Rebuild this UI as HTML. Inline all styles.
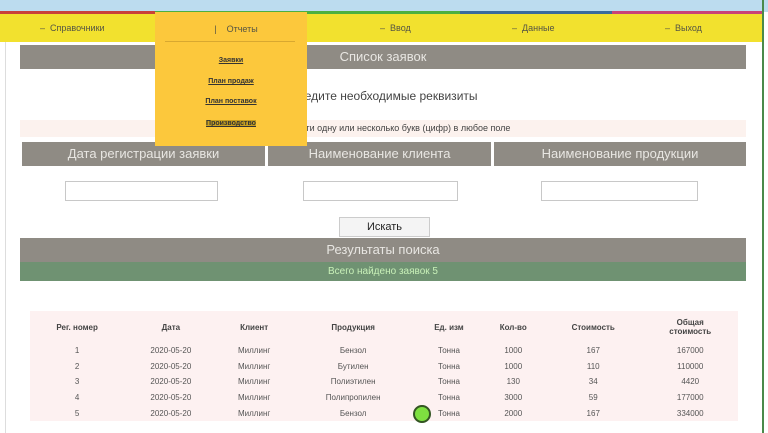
<!DOCTYPE html>
<html><head><meta charset="utf-8"><style>
*{margin:0;padding:0;box-sizing:border-box}
body{width:768px;height:433px;overflow:hidden;background:#fff;position:relative;font-family:"Liberation Sans","DejaVu Sans",sans-serif;color:#333}
.a{position:absolute}
.g{background:#8f8b84;color:#e8e6e2;text-align:center;font-size:13px}
.mi{font-size:9px;color:#554;top:23px}
.dl{position:absolute;left:0;width:152px;text-align:center;font-size:7px;font-weight:bold}
.dl span{color:#333;text-decoration:underline}
table{border-collapse:collapse;font-size:8px;color:#555;width:100%}
td,th{text-align:center;height:15.6px;padding:0}
th{font-weight:bold;color:#444;height:32px}
input{position:absolute;height:20px;border:1px solid #c8c8c8;background:#fff}
</style></head><body>
<div class="a" style="left:0;top:0;width:768px;height:12px;background:#bcdcef"></div>
<div class="a" style="left:0;top:11px;width:155px;height:3px;background:#c8413a"></div>
<div class="a" style="left:155px;top:11px;width:305px;height:3px;background:#4cb040"></div>
<div class="a" style="left:460px;top:11px;width:152px;height:3px;background:#3a6a9c"></div>
<div class="a" style="left:612px;top:11px;width:150px;height:3px;background:#c84478"></div>
<div class="a" style="left:0;top:14px;width:762px;height:28px;background:#f2e12e"></div>
<div class="a" style="left:762px;top:0;width:2px;height:433px;background:#4a8a4a"></div>
<div class="a" style="left:5px;top:42px;width:1px;height:391px;background:#ddd"></div>
<div class="a mi" style="left:40px">–&nbsp;&nbsp;Справочники</div>
<div class="a mi" style="left:380px">–&nbsp;&nbsp;Ввод</div>
<div class="a mi" style="left:512px">–&nbsp;&nbsp;Данные</div>
<div class="a mi" style="left:665px">–&nbsp;&nbsp;Выход</div>
<div class="a g" style="left:20px;top:45px;width:726px;height:24px;line-height:24px">Список заявок</div>
<div class="a" style="left:0;top:89px;width:768px;text-align:center;font-size:12px;color:#444">Введите необходимые реквизиты</div>
<div class="a" style="left:20px;top:120px;width:726px;height:17px;background:#fcf2ee;font-size:9px;line-height:17px;text-align:center;color:#444">Можно ввести одну или несколько букв (цифр) в любое поле</div>
<div class="a g" style="left:22px;top:142px;width:243px;height:24px;line-height:24px">Дата регистрации заявки</div>
<div class="a g" style="left:268px;top:142px;width:223px;height:24px;line-height:24px">Наименование клиента</div>
<div class="a g" style="left:494px;top:142px;width:252px;height:24px;line-height:24px">Наименование продукции</div>
<input style="left:65px;top:181px;width:153px">
<input style="left:303px;top:181px;width:155px">
<input style="left:541px;top:181px;width:157px">
<div class="a" style="left:339px;top:217px;width:91px;height:20px;border:1px solid #ccc;background:#f4f4f4;font-size:11px;text-align:center;line-height:18px;color:#222">Искать</div>
<div class="a g" style="left:20px;top:238px;width:726px;height:24px;line-height:24px">Результаты поиска</div>
<div class="a" style="left:20px;top:262px;width:726px;height:19px;background:#6f9272;color:#c8f0b8;font-size:10px;text-align:center;line-height:19px">Всего найдено заявок 5</div>
<div class="a" style="left:30px;top:311px;width:708px;background:#fdf1f1">
<table>
<tr><th>Рег. номер</th><th>Дата</th><th>Клиент</th><th>Продукция</th><th>Ед. изм</th><th>Кол-во</th><th>Стоимость</th><th>Общая<br>стоимость</th></tr>
<tr><td>1</td><td>2020-05-20</td><td>Миллинг</td><td>Бензол</td><td>Тонна</td><td>1000</td><td>167</td><td>167000</td></tr>
<tr><td>2</td><td>2020-05-20</td><td>Миллинг</td><td>Бутилен</td><td>Тонна</td><td>1000</td><td>110</td><td>110000</td></tr>
<tr><td>3</td><td>2020-05-20</td><td>Миллинг</td><td>Полиэтилен</td><td>Тонна</td><td>130</td><td>34</td><td>4420</td></tr>
<tr><td>4</td><td>2020-05-20</td><td>Миллинг</td><td>Полипропилен</td><td>Тонна</td><td>3000</td><td>59</td><td>177000</td></tr>
<tr><td>5</td><td>2020-05-20</td><td>Миллинг</td><td>Бензол</td><td>Тонна</td><td>2000</td><td>167</td><td>334000</td></tr>
</table></div>
<div class="a" style="left:413px;top:405px;width:18px;height:18px;border-radius:50%;background:#7ee040;border:2px solid #335522"></div>
<div class="a" style="left:155px;top:12px;width:152px;height:134px;background:#fcc83c">
<div class="dl" style="top:12px;font-size:9px;font-weight:normal;color:#554;left:5px">|&nbsp;&nbsp;&nbsp;&nbsp;Отчеты</div>
<div class="a" style="left:10px;top:29px;width:130px;border-top:1px solid #d8a830"></div>
<div class="dl" style="top:45px"><span>Заявки</span></div>
<div class="dl" style="top:66px"><span>План продаж</span></div>
<div class="dl" style="top:86px"><span>План поставок</span></div>
<div class="dl" style="top:108px"><span style="background:#c8a020">Производство</span></div>
</div>
</body></html>
